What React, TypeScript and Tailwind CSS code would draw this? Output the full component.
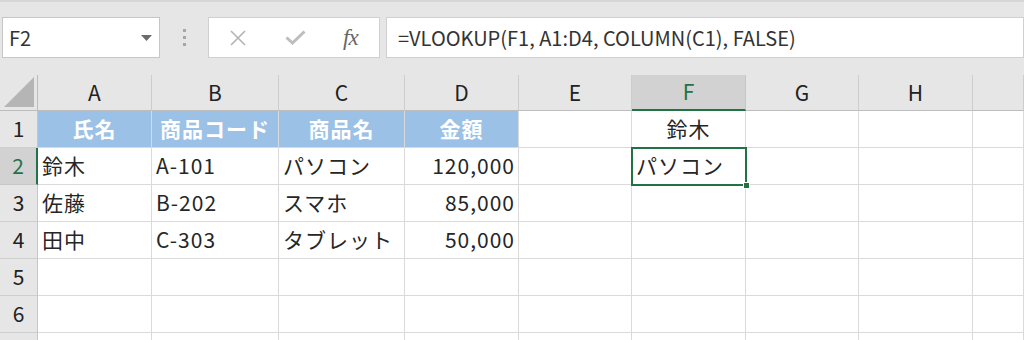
import React from 'react';

const COLS = ['A', 'B', 'C', 'D', 'E', 'F', 'G', 'H', ''];

type Cell = { text?: string; align?: 'left' | 'center' | 'right'; head?: boolean };

const ROWS: Cell[][] = [
  [
    { text: '氏名', align: 'center', head: true },
    { text: '商品コード', align: 'center', head: true },
    { text: '商品名', align: 'center', head: true },
    { text: '金額', align: 'center', head: true },
    {},
    { text: '鈴木', align: 'center' },
    {}, {}, {},
  ],
  [
    { text: '鈴木' }, { text: 'A-101' }, { text: 'パソコン' }, { text: '120,000', align: 'right' },
    {}, { text: 'パソコン' }, {}, {}, {},
  ],
  [
    { text: '佐藤' }, { text: 'B-202' }, { text: 'スマホ' }, { text: '85,000', align: 'right' },
    {}, {}, {}, {}, {},
  ],
  [
    { text: '田中' }, { text: 'C-303' }, { text: 'タブレット' }, { text: '50,000', align: 'right' },
    {}, {}, {}, {}, {},
  ],
  [{}, {}, {}, {}, {}, {}, {}, {}, {}],
  [{}, {}, {}, {}, {}, {}, {}, {}, {}],
  [{}, {}, {}, {}, {}, {}, {}, {}, {}],
];

const FONT = "font-['Noto_Sans_CJK_JP','Noto_Sans',sans-serif]";

export default function App() {
  return (
    <div className={`w-[1024px] h-[340px] overflow-hidden bg-[#e6e6e6] ${FONT}`}>
      {/* formula bar strip */}
      <div className="h-[75px] border-t-2 border-[#d6d6d6] flex items-start pt-[15px] pl-[2px]">
        <div className="w-[158px] h-[41px] bg-white border border-[#c6c6c6] flex items-center justify-between pl-[6px] pr-[7px]">
          <span className="text-[20px] text-[#333] leading-none">F2</span>
          <svg width="11" height="6" viewBox="0 0 11 6"><path d="M0 0 L11 0 L5.5 6 Z" fill="#6b6b6b" /></svg>
        </div>
        <div className="w-[48px] h-[41px] flex flex-col items-center justify-center gap-[4px]">
          <span className="w-[3px] h-[3px] bg-[#a6a6a6]" />
          <span className="w-[3px] h-[3px] bg-[#a6a6a6]" />
          <span className="w-[3px] h-[3px] bg-[#a6a6a6]" />
        </div>
        <div className="w-[172px] h-[41px] bg-white border border-[#d0d0d0] flex items-center">
          <svg className="ml-[20px]" width="18" height="16" viewBox="0 0 18 16">
            <path d="M2 1 L16 15 M16 1 L2 15" stroke="#b3b3b3" strokeWidth="1.6" fill="none" />
          </svg>
          <svg className="ml-[38px]" width="21" height="15" viewBox="0 0 21 15">
            <path d="M1.5 7.5 L7.5 13 L19.5 1.5" stroke="#bdbdbd" strokeWidth="3" fill="none" />
          </svg>
          <span className="ml-[37px] text-[23px] italic text-[#666] font-['Liberation_Serif',serif] leading-none tracking-[-1px]">fx</span>
        </div>
        <div className="ml-[6px] flex-1 h-[41px] bg-white border border-[#d0d0d0] flex items-center pl-[11px]">
          <span className="text-[20px] text-[#333] leading-none">=VLOOKUP(F1, A1:D4, COLUMN(C1), FALSE)</span>
        </div>
      </div>

      {/* sheet grid */}
      <div className="relative grid grid-cols-[38px_114px_127px_126px_114px_113px_114px_113px_114px_1fr] grid-rows-[36px_repeat(7,37px)]">
        {/* corner */}
        <div className="bg-[#e6e6e6] border-r border-b border-[#bdbdbd] flex items-end justify-end pr-[3px] pb-[3px]">
          <svg width="30" height="30" viewBox="0 0 30 30"><path d="M30 0 L30 30 L0 30 Z" fill="#b5b5b5" /></svg>
        </div>
        {COLS.map((c, i) =>
          c === 'F' ? (
            <div key={i} className="bg-[#d2d2d2] border-r border-[#c6c6c6] border-b-2 border-b-[#217346] flex items-center justify-center text-[21px] text-[#217346]">
              {c}
            </div>
          ) : (
            <div key={i} className="bg-[#e6e6e6] border-r border-[#cdcdcd] border-b border-b-[#bdbdbd] flex items-center justify-center text-[21px] text-[#222]">
              {c}
            </div>
          )
        )}

        {ROWS.map((row, r) => (
          <React.Fragment key={r}>
            {r === 1 ? (
              <div className="bg-[#d2d2d2] border-r-2 border-[#217346] border-b border-b-[#c6c6c6] flex items-center justify-center text-[21px] text-[#217346]">
                {r + 1}
              </div>
            ) : (
              <div className="bg-[#e6e6e6] border-r border-[#c6c6c6] border-b border-b-[#cfcfcf] flex items-center justify-center text-[21px] text-[#222]">
                {r < 6 ? r + 1 : ''}
              </div>
            )}
            {row.map((cell, c) => (
              <div
                key={c}
                className={
                  'flex items-center px-[4px] border-r border-b border-[#dadada] text-[21px] tracking-[1px] whitespace-nowrap overflow-hidden ' +
                  (cell.head ? 'bg-[#9bc2e6] text-white font-bold ' : 'bg-white text-[#262626] ') +
                  (cell.align === 'center' ? 'justify-center' : cell.align === 'right' ? 'justify-end pr-[3px]' : 'justify-start')
                }
              >
                {cell.text}
              </div>
            ))}
          </React.Fragment>
        ))}

        {/* active cell F2 */}
        <div className="absolute left-[631px] top-[72px] w-[116px] h-[39px] border-2 border-[#217346] pointer-events-none" />
        <div className="absolute left-[743px] top-[107px] w-[7px] h-[7px] bg-[#217346] border border-white" />
      </div>
    </div>
  );
}
